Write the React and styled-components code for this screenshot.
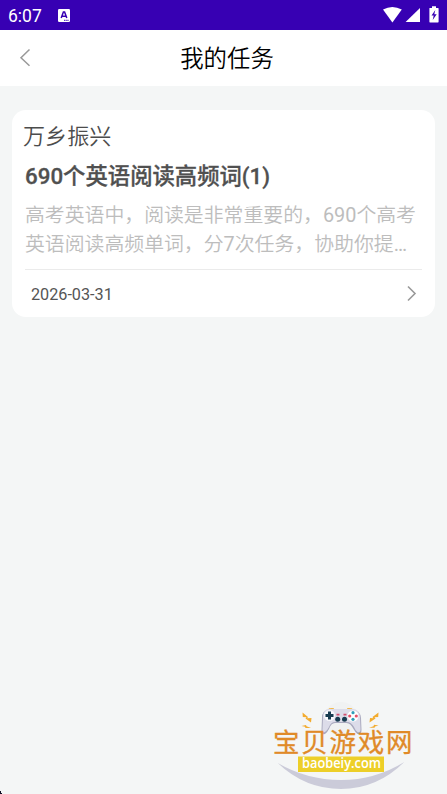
import React from 'react';
import styled, { createGlobalStyle } from 'styled-components';

const GlobalStyle = createGlobalStyle`
  * {
    box-sizing: border-box;
  }
  body {
    margin: 0;
    background-color: #f4f6f6;
    font-family: Roboto, 'Noto Sans CJK SC', sans-serif;
  }
`;

const Container = styled.div`
  height: 794px;
  display: flex;
  flex-direction: column;
  overflow: hidden;
`;

const StatusBar = styled.div`
  height: 30px;
  padding: 0 8px;
  display: flex;
  align-items: center;
  justify-content: space-between;
  background-color: #3700b3;
  color: #fff;
`;

const StatusGroup = styled.div`
  display: flex;
  align-items: center;
`;

const Clock = styled.span`
  width: 50px;
  padding-top: 1px;
  font-size: 17.5px;
  line-height: 30px;
`;

const StatusIcons = styled.svg`
  display: block;
`;

const Header = styled.header`
  height: 56px;
  padding: 0 11px 0 18px;
  display: grid;
  grid-template-columns: 40px 1fr 40px;
  align-items: center;
  background-color: #fff;
`;

const Title = styled.h1`
  margin: 0;
  padding-top: 2px;
  font-size: 23.4px;
  font-weight: 350;
  line-height: 54px;
  text-align: center;
  color: #000;
`;

const Chevron = styled.svg`
  display: block;
  fill: none;
  stroke: #999;
  stroke-width: ${(props) => props.$weight};
`;

const Card = styled.section`
  height: 207px;
  margin: 24px 12px 0;
  padding: 9px 13px 0;
  border-radius: 14px;
  background-color: #fff;
`;

const Organizer = styled.div`
  margin-left: -2px;
  font-size: 22.1px;
  font-weight: 350;
  line-height: 34px;
  color: #4c4c4c;
`;

const TaskName = styled.h2`
  margin: 3px 0 0;
  font-size: 22.35px;
  font-weight: 500;
  line-height: 40px;
  color: #505050;
  -webkit-text-stroke: 0.3px #505050;
`;

const Desc = styled.p`
  margin: 5px 0 0;
  font-size: 19.88px;
  font-weight: 350;
  line-height: 29px;
  color: #bdbdbd;
`;

const DescLine = styled.span`
  display: block;
  white-space: nowrap;
`;

const Num = styled.span`
  font-weight: 400;
`;

const CardFooter = styled.div`
  height: 48px;
  margin-top: 10px;
  padding: 0 5px 0 6px;
  display: flex;
  align-items: center;
  justify-content: space-between;
  border-top: 1px solid #ebebeb;
`;

const DateText = styled.span`
  padding-top: 2px;
  font-size: 16.2px;
  color: #555;
`;

const Brand = styled.div`
  margin: auto 27px 0 auto;
`;

const Logo = styled.svg`
  display: block;
`;

const BrandName = styled.text`
  font-family: 'Noto Sans CJK SC', sans-serif;
  font-size: 26.5px;
  font-weight: 400;
  fill: #e08a28;
  stroke: #e08a28;
  stroke-width: 0.3;
`;

const BrandUrl = styled.text`
  font-family: 'Open Sans', 'Noto Sans', sans-serif;
  font-size: 14.5px;
  font-weight: 600;
  fill: #fff;
`;

const CornerMark = styled.svg`
  position: absolute;
  left: 0;
  top: 791px;
`;

const InputIcon = () => (
  <StatusIcons width='12' height='13' viewBox='0 0 12 13'>
    <rect width='12' height='13' rx='1.2' fill='#fff' />
    <path
      d='M3.2 9 5.4 3h1.2l2.2 6M4.2 7.2h3.6'
      fill='none'
      stroke='#3700b3'
      strokeWidth='1.5'
    />
    <path d='M6 11.3h5' stroke='#3700b3' strokeDasharray='1.5 .7' />
  </StatusIcons>
);

const SignalIcons = () => (
  <StatusIcons width='58' height='18' viewBox='0 0 58 18' fill='#fff'>
    <path d='M2 3.6Q11.3-1.6 20.8 3.6L11.4 16.4Z' />
    <path d='M39 2v14H24.6Z' />
    <path d='M48.5 2H51V.3h4V2h2a.6.6 0 0 1 .6.6v13.2a.6.6 0 0 1-.6.6h-8a.6.6 0 0 1-.6-.6V2.6Z' />
    <path
      d='m54.3 4-3.8 5.6h2.2l-1 4.4 4-5.8h-2.4Z'
      fill='#3700b3'
    />
  </StatusIcons>
);

const BaobeiLogo = () => (
  <Logo width='155' height='94' viewBox='0 0 155 94'>
    <circle cx='76' cy='19' r='17' fill='#f0f2f2' />
    <path
      d='M12.7 63Q42 80 76 80T139.3 62Q112 89 76 89T12.7 63Z'
      fill='#cbcbd9'
    />
    {/* game pad */}
    <path
      d='M62.5 10.5q1-2 3-2h3v2M82.5 10.5v-2h3q2 0 3 2'
      fill='#f2b84b'
      stroke='#f2b84b'
    />
    <path
      d='M64 10h24q7 0 8 8l.5 12q0 5-4 4-2-1-4-5-3-6-7-6H70q-4 0-6 6-2 4-4 5-4 1-3.5-4L57 18q0-8 7-8Z'
      fill='#a9a9be'
    />
    <path
      d='M64 9h24q6 0 7 8l.5 12q0 4-3 3-2-1-3.500-5-3-5-7-5H70q-4 0-6 5-2 4-4 5-3 1-2.500-3L58 17q0-8 6-8Z'
      fill='#dcdce9'
    />
    <circle cx='64.5' cy='15.5' r='5.5' fill='#f8f8fc' />
    <path d='M64.5 11.5v8M60.5 15.5h8' stroke='#173b50' strokeWidth='3' />
    <circle cx='72.7' cy='19.3' r='2.5' fill='#173b50' />
    <circle cx='79.5' cy='19.3' r='2.5' fill='#173b50' />
    <path d='M71.5 14.7h3M78.5 14.7h3' stroke='#d24d6e' strokeWidth='1.8' />
    <circle cx='88' cy='16' r='5.5' fill='#fff' />
    <circle cx='88' cy='12.7' r='1.6' fill='#2f9db9' />
    <circle cx='88' cy='19.3' r='1.6' fill='#2f9db9' />
    <circle cx='84.7' cy='16' r='1.6' fill='#e45168' />
    <circle cx='91.3' cy='16' r='1.6' fill='#e45168' />
    {/* sparks */}
    <g fill='#f3ac2f'>
      <path d='m37.500 12.500 5.500 4.500-.8 1.200 4.300-.2-.5 4.500-5.500-4 1-1.300-3.700-.2Z' />
      <path d='m113.500 12.500-6 4.500.8 1.200-3.300-.2-.5 4.500 6-4-1-1.300 3.700-.2Z' />
      <path d='m36.500 26 4.500-1 .5 1.300 4.500 1.700h-5.500l-.5-1.300Z' />
      <path d='m113.500 25.500-4.500-.8-.5 1.500-4.500 1.600h5.500l.5-1.200Z' />
    </g>
    <BrandName x='8' y='52' textLength='139.5'>
      宝贝游戏网
    </BrandName>
    <rect x='33' y='56.5' width='86' height='15.5' fill='#edcf28' />
    <BrandUrl x='37' y='68.3' textLength='79' lengthAdjust='spacingAndGlyphs'>
      baobeiy.com
    </BrandUrl>
  </Logo>
);

const App = () => {
  return (
    <Container>
      <GlobalStyle />
      <StatusBar>
        <StatusGroup>
          <Clock>6:07</Clock>
          <InputIcon />
        </StatusGroup>
        <SignalIcons />
      </StatusBar>

      <Header>
        <Chevron width='14' height='20' $weight='1.5'>
          <path d='M11.5 1.5 3 9.8l8.5 8' />
        </Chevron>
        <Title>我的任务</Title>
      </Header>

      <Card>
        <Organizer>万乡振兴</Organizer>
        <TaskName>690个英语阅读高频词(1)</TaskName>
        <Desc>
          <DescLine>
            高考英语中，阅读是非常重要的，<Num>690</Num>个高考
          </DescLine>
          <DescLine>
            英语阅读高频单词，分<Num>7</Num>次任务，协助你提<Num>…</Num>
          </DescLine>
        </Desc>
        <CardFooter>
          <DateText>2026-03-31</DateText>
          <Chevron width='11' height='18' $weight='1.6'>
            <path d='m2 1.5 7 7-7 7' />
          </Chevron>
        </CardFooter>
      </Card>

      <Brand>
        <BaobeiLogo />
      </Brand>
      <CornerMark width='2' height='3'>
        <path d='M0 0h1v2h1v1H0Z' fill='#101026' />
      </CornerMark>
    </Container>
  );
};

export default App;
